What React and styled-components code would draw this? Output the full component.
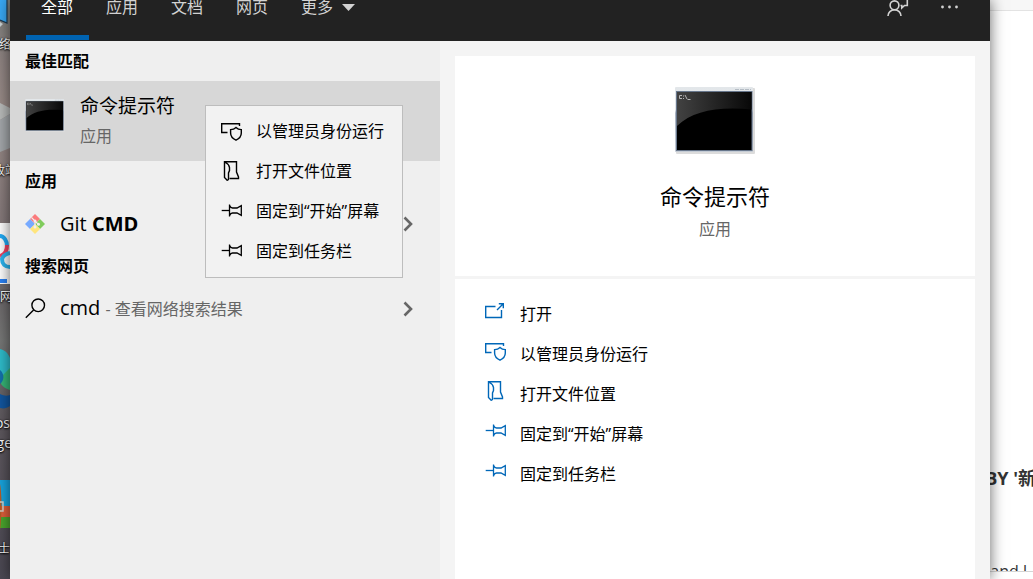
import React, { useId } from "react";
import styled, { createGlobalStyle } from "styled-components";

const GlobalStyle = createGlobalStyle`
  * {
    box-sizing: border-box;
  }

  body {
    margin: 0;
    color: #000;
    font-family: "Open Sans", "Noto Sans CJK SC", sans-serif;
    font-size: 16px;
    line-height: 24px;
  }

  button {
    margin: 0;
    border: 0;
    padding: 0;
    color: inherit;
    background: none;
    font: inherit;
    text-align: left;
    cursor: pointer;
  }

  svg {
    display: block;
    flex: none;
  }
`;

const Screen = styled.div`
  display: flex;
  height: 100vh;
  overflow: hidden;
`;

/* desktop strip */

const Desktop = styled.div`
  position: relative;
  flex: 0 0 10px;
  overflow: hidden;
  background: linear-gradient(
    #7b7f7c 0,
    #8f8482 60px,
    #9a8c88 110px,
    #85797a 220px,
    #6d696b 300px,
    #777877 340px,
    #5f595f 420px,
    #4b4853 100%
  );
`;

const Shortcut = styled.div`
  position: absolute;
  top: ${props => props.$top}px;
  left: 0;
`;

const ShortcutLabel = styled.span`
  position: absolute;
  top: ${props => props.$top}px;
  right: ${props => props.$right}px;
  color: #fff;
  font-size: ${props => props.$size || 12}px;
  line-height: 20px;
  white-space: nowrap;
  text-shadow: 0 1px 2px #000, 0 0 2px #000;
`;

/* search panel */

const Panel = styled.main`
  position: relative;
  z-index: 1;
  display: flex;
  flex-direction: column;
  flex: 1;
  min-width: 0;
  background: #f4f4f4;
  box-shadow: 0 0 14px rgba(0, 0, 0, 0.6);
`;

const Header = styled.header`
  display: flex;
  align-items: flex-end;
  justify-content: space-between;
  flex: 0 0 41px;
  height: 41px;
  padding: 0 32px 0 15px;
  overflow: hidden;
  background: #222;
  color: #d2d2d2;
`;

const Tabs = styled.nav`
  display: flex;
  gap: 1px;
`;

const Tab = styled.button`
  position: relative;
  display: flex;
  align-items: center;
  gap: 9px;
  height: 68px;
  padding: 0 16px;
  color: ${props => (props.$active ? "#fff" : "inherit")};

  &::after {
    content: "";
    position: absolute;
    right: 0;
    bottom: 1px;
    left: 1px;
    height: 5px;
    background: ${props => (props.$active ? "#0063b1" : "transparent")};
  }
`;

const Tools = styled.div`
  display: flex;
  gap: 32px;
`;

const ToolButton = styled.button`
  display: flex;
  align-items: center;
  height: 68px;
`;

const Body = styled.div`
  display: flex;
  flex: 1;
  min-height: 0;
`;

const Results = styled.section`
  flex: 0 0 430px;
  background: #efefef;
`;

const GroupTitle = styled.h2`
  margin: 0;
  padding: 0 15px;
  font-size: 16px;
  font-weight: bold;
  line-height: 40px;
`;

const BestMatch = styled.div`
  position: relative;
  background: #d7d7d7;
`;

const BestMatchButton = styled.button`
  display: flex;
  align-items: flex-start;
  gap: 15px;
  width: 100%;
  height: 80px;
  padding: 18px 15px 0;
`;

const BestMatchText = styled.span`
  display: flex;
  flex-direction: column;
  gap: 4px;
  margin-top: -7px;
`;

const BestMatchName = styled.span`
  font-size: 19px;
  line-height: 28px;
`;

const Kind = styled.span`
  color: #666;
  line-height: 24px;
`;

const ResultRow = styled.button`
  display: flex;
  align-items: center;
  width: 100%;
  height: 45px;
  padding: 0 26px 0 15px;
`;

const ResultName = styled.span`
  flex: 1;
  padding-left: ${props => props.$pad}px;
  font-size: 20px;
`;

const Hint = styled.span`
  color: #666;
  font-size: 16px;
`;

const ContextMenu = styled.div`
  position: absolute;
  z-index: 2;
  top: 24px;
  left: 195px;
  width: 198px;
  padding: 5px 0 6px;
  border: 1px solid #bdbdbd;
  background: #f2f2f2;
`;

const MenuItem = styled.button`
  display: flex;
  align-items: center;
  gap: 14px;
  width: 100%;
  height: 40px;
  padding: 0 15px;
  white-space: nowrap;
`;

/* details */

const Details = styled.section`
  display: flex;
  flex-direction: column;
  flex: 1;
  gap: 3px;
  min-width: 0;
  padding: 15px 15px 0;
`;

const Summary = styled.div`
  display: flex;
  flex-direction: column;
  align-items: center;
  height: 220px;
  padding-top: 31px;
  background: #fff;
`;

const AppName = styled.h1`
  margin: 26px 0 5px;
  font-size: 22px;
  font-weight: normal;
  line-height: 32px;
`;

const Actions = styled.div`
  flex: 1;
  padding: 15px 30px 0;
  background: #fff;
`;

const Action = styled.button`
  display: flex;
  align-items: center;
  gap: 14px;
  width: 100%;
  height: 40px;

  svg {
    margin-bottom: 6px;
    color: #0067b8;
  }
`;

/* page behind the panel */

const Backdrop = styled.aside`
  flex: 0 0 43px;
  display: flex;
  flex-direction: column;
  overflow: hidden;
  background: #fff;
  color: #333;
  white-space: nowrap;
`;

const BackdropBar = styled.div`
  height: 11px;
  border-bottom: 1px solid #e3e3e3;
  background: #f7f7f7;
`;

const BackdropCode = styled.div`
  display: flex;
  justify-content: flex-end;
  margin-top: 455px;
  margin-right: -3px;
  font-size: 18px;
  font-weight: bold;
`;

const BackdropLine = styled.div`
  display: flex;
  justify-content: flex-end;
  height: 8px;
  margin-top: 74px;
  padding-right: 6px;
  overflow: hidden;
  border-bottom: 1px solid #d5d5d5;
  line-height: 14px;
`;

const svgProps = { fill: "none", stroke: "currentColor" };

const RunAsIcon = () => (
  <svg width="21" height="20" viewBox="0 0 21 20" strokeWidth="1.4" {...svgProps}>
    <path d="M6.5 11.5H.7V2.7H18.5V5" />
    <path d="M15 6.5C13.5 8 11.5 8.6 9.6 8.6V12C9.6 15.5 12 17.8 15 19.2C18 17.8 20.3 15.5 20.3 12V8.6C18.5 8.6 16.5 8 15 6.5Z" />
  </svg>
);

const LocationIcon = () => (
  <svg width="21" height="20" viewBox="0 0 21 20" strokeWidth="1.4" {...svgProps}>
    <path d="M3.5.7H15.5V11L17.5 16V17.5H8.5" />
    <path d="M3.5.7V16.5L6.2 19.2C7.7 19.2 7.5 18 7.5 16.5V12L8.5 9.5V6.5C8 4.5 6 2 3.5.7Z" />
  </svg>
);

const PinIcon = () => (
  <svg width="21" height="20" viewBox="0 0 21 20" strokeWidth="1.3" {...svgProps}>
    <path d="M.7 9.5H8.5" />
    <path d="M8.5 3.5V15.5M8.5 4.2C9.3 6.2 10.3 7 11.5 7H16L20.3 4.6V14.4L16 12H11.5C10.3 12 9.3 12.8 8.5 14.8" />
  </svg>
);

const OpenIcon = () => (
  <svg width="21" height="20" viewBox="0 0 21 20" strokeWidth="1.4" {...svgProps}>
    <path d="M10.5 5.5H.7V16.5H16.5V9" />
    <path d="M12 9L18.5 2.5M13.8 2.7H18.3V7.2" />
  </svg>
);

const ChevronIcon = () => (
  <svg width="11" height="16" viewBox="0 0 11 16" strokeWidth="2.6" {...svgProps} stroke="#666">
    <path d="M1.5 1.5L8 8L1.5 14.5" />
  </svg>
);

const SearchIcon = () => (
  <svg width="21" height="21" viewBox="0 0 21 21" strokeWidth="1.4" {...svgProps}>
    <circle cx="13.2" cy="7.3" r="6.3" />
    <path d="M8.6 12L.8 19.8" />
  </svg>
);

const GitIcon = () => (
  <svg width="20" height="20" viewBox="0 0 20 20">
    <path d="M10 0L15 5L10 10L5 5Z" fill="#fb7b7c" />
    <path d="M5 5L10 10L5 15L0 10Z" fill="#77aaff" />
    <path d="M15 5L20 10L15 15L10 10Z" fill="#80cc5c" />
    <path d="M10 10L15 15L10 20L5 15Z" fill="#ffe57d" />
    <path d="M6.5 3.5L10 7V13M10 7L13.5 10.5" fill="none" stroke="#efefef" strokeWidth="1.1" />
    <circle cx="10" cy="7" r="1.5" fill="#efefef" />
    <circle cx="10" cy="13" r="1.5" fill="#efefef" />
    <circle cx="13.5" cy="10.2" r="1.5" fill="#efefef" />
  </svg>
);

const FeedbackIcon = () => (
  <svg width="22" height="22" viewBox="0 0 22 22" strokeWidth="1.6" {...svgProps}>
    <circle cx="7.5" cy="9.3" r="4.4" />
    <path d="M1 20C1 16.5 3.8 13.8 7.5 13.8S14 16.5 14 20" />
    <path d="M6 3V0H20.3V9.5H17.5L14.8 12V9.5H13.5" />
  </svg>
);

const MoreIcon = () => (
  <svg width="17" height="4" viewBox="0 0 17 4" fill="currentColor">
    <circle cx="1.5" cy="2" r="1.4" />
    <circle cx="8.5" cy="2" r="1.4" />
    <circle cx="15.5" cy="2" r="1.4" />
  </svg>
);

const CaretIcon = () => (
  <svg width="13" height="7" viewBox="0 0 13 7" fill="currentColor">
    <path d="M0 0H13L6.5 7Z" />
  </svg>
);

const TerminalIcon = ({ width, height }) => {
  const id = useId();
  return (
    <svg width={width} height={height} viewBox="0 0 80 67">
      <defs>
        <linearGradient id={`${id}-frame`} x2="0" y2="1">
          <stop offset="0" stopColor="#e3e7ea" />
          <stop offset="0.35" stopColor="#dfe3e8" />
          <stop offset="0.4" stopColor="#a9b3c2" />
          <stop offset="1" stopColor="#c5ccd5" />
        </linearGradient>
        <linearGradient id={`${id}-glass`}>
          <stop offset="0" stopColor="#424242" />
          <stop offset="1" stopColor="#080808" />
        </linearGradient>
      </defs>
      <rect x="1" y="1" width="79" height="66" rx="1" fill="#dcdcdc" />
      <rect x="0" y="0" width="78" height="65" rx="1" fill={`url(#${id}-frame)`} />
      <path d="M60 2.5H76" stroke="#b4bcc4" strokeDasharray="4 1" />
      <rect x="1.5" y="4.5" width="75.5" height="59" fill="#000" stroke="#68778c" />
      <path d="M2 5H76.5V22.5C42 19.5 18 24 2 39Z" fill={`url(#${id}-glass)`} />
      <g fill="none" stroke="#b5b5b5" strokeWidth="1">
        <path d="M7 8.5H4.5V11.5H7M8.5 8.5V9.5M8.5 11V12M10 8L12 12M12.5 12.5H15.5" />
      </g>
    </svg>
  );
};

const menuItems = [
  { text: "以管理员身份运行", Icon: RunAsIcon },
  { text: "打开文件位置", Icon: LocationIcon },
  { text: "固定到“开始”屏幕", Icon: PinIcon },
  { text: "固定到任务栏", Icon: PinIcon }
];

const actions = [{ text: "打开", Icon: OpenIcon }, ...menuItems];

const DesktopIcons = () => (
  <Desktop>
    <Shortcut $top={0}>
      <svg width="10" height="32" viewBox="0 0 10 32">
        <path d="M0 0H7V23L0 20Z" fill="#39a9f5" />
        <path d="M7 0V23L0 20" fill="none" stroke="#1d3a52" strokeWidth="1.2" />
        <path d="M0 22L3 24L0 27Z" fill="#c9d3d6" />
      </svg>
    </Shortcut>
    <ShortcutLabel $top={35} $right={-1}>网络</ShortcutLabel>
    <Shortcut $top={100}>
      <svg width="10" height="54" viewBox="0 0 10 54">
        <path d="M0 3L10 8V14L0 20Z" fill="#b9bbba" />
        <path d="M0 20L10 14V48L0 52Z" fill="#a4a8ab" />
      </svg>
    </Shortcut>
    <ShortcutLabel $top={161} $right={-7}>回收站</ShortcutLabel>
    <Shortcut $top={223}>
      <svg width="10" height="61" viewBox="0 0 10 61">
        <rect width="10" height="61" fill="#fff" />
        <g fill="none" strokeWidth="4">
          <path d="M0 13C4 13 7 18 7 23" stroke="#20aaf5" />
          <path d="M7 22C7 29 4 32 0 33" stroke="#f2415f" />
          <path d="M10 30C6 31 3 33 2 36C2 41 5 44 10 44" stroke="#2cb5f0" />
        </g>
        <rect y="56" width="7" height="4" fill="#2b82f5" />
      </svg>
    </Shortcut>
    <ShortcutLabel $top={287} $right={-2}>百度网</ShortcutLabel>
    <Shortcut $top={348}>
      <svg width="10" height="61" viewBox="0 0 10 61">
        <path d="M0 1C5 2 8 5 10 10V41L5 36C4 30 3 26 0 24Z" fill="#2fbccb" />
        <path d="M2 28L10 20V42C6 41 3 39 1 36Z" fill="#37b878" />
        <path d="M0 22C4 25 5 32 0 36Z" fill="#1472ad" />
        <path d="M0 46C4 48 7 48 10 47V58C7 60 4 61 0 60Z" fill="#1256a0" />
      </svg>
    </Shortcut>
    <ShortcutLabel $top={413} $right={0} $size={14}>Micros</ShortcutLabel>
    <ShortcutLabel $top={433} $right={-2} $size={14}>Edge</ShortcutLabel>
    <Shortcut $top={480}>
      <svg width="10" height="52" viewBox="0 0 10 52">
        <path d="M0 0H10V26H0Z" fill="#18a5df" />
        <path d="M0 26H10V37H0Z" fill="#e2603c" />
        <path d="M0 37H10V48H0Z" fill="#4ba82e" />
        <path d="M0 4C2 14 2 36 0 50Z" fill="#b85c25" />
        <path d="M0 22H3V31H0" fill="none" stroke="#d6d2cc" strokeWidth="1.5" />
      </svg>
    </Shortcut>
    <ShortcutLabel $top={539} $right={0}>卫士</ShortcutLabel>
  </Desktop>
);

const App = () => {
  return (
    <>
      <GlobalStyle />
      <Screen>
        <DesktopIcons />
        <Panel>
          <Header>
            <Tabs>
              <Tab $active>全部</Tab>
              <Tab>应用</Tab>
              <Tab>文档</Tab>
              <Tab>网页</Tab>
              <Tab>
                更多
                <CaretIcon />
              </Tab>
            </Tabs>
            <Tools>
              <ToolButton aria-label="反馈">
                <FeedbackIcon />
              </ToolButton>
              <ToolButton aria-label="选项">
                <MoreIcon />
              </ToolButton>
            </Tools>
          </Header>
          <Body>
            <Results>
              <GroupTitle>最佳匹配</GroupTitle>
              <BestMatch>
                <BestMatchButton>
                  <TerminalIcon width={40} height={33} />
                  <BestMatchText>
                    <BestMatchName>命令提示符</BestMatchName>
                    <Kind>应用</Kind>
                  </BestMatchText>
                </BestMatchButton>
                <ContextMenu role="menu">
                  {menuItems.map(({ text, Icon }) => (
                    <MenuItem role="menuitem" key={text}>
                      <Icon />
                      {text}
                    </MenuItem>
                  ))}
                </ContextMenu>
              </BestMatch>
              <GroupTitle>应用</GroupTitle>
              <ResultRow>
                <GitIcon />
                <ResultName $pad={15}>
                  Git <b>CMD</b>
                </ResultName>
                <ChevronIcon />
              </ResultRow>
              <GroupTitle>搜索网页</GroupTitle>
              <ResultRow>
                <SearchIcon />
                <ResultName $pad={14}>
                  cmd <Hint>- 查看网络搜索结果</Hint>
                </ResultName>
                <ChevronIcon />
              </ResultRow>
            </Results>
            <Details>
              <Summary>
                <TerminalIcon width={80} height={67} />
                <AppName>命令提示符</AppName>
                <Kind>应用</Kind>
              </Summary>
              <Actions>
                {actions.map(({ text, Icon }) => (
                  <Action key={text}>
                    <Icon />
                    {text}
                  </Action>
                ))}
              </Actions>
            </Details>
          </Body>
        </Panel>
        <Backdrop>
          <BackdropBar />
          <BackdropCode>BY '新</BackdropCode>
          <BackdropLine>and l</BackdropLine>
        </Backdrop>
      </Screen>
    </>
  );
};

export default App;
